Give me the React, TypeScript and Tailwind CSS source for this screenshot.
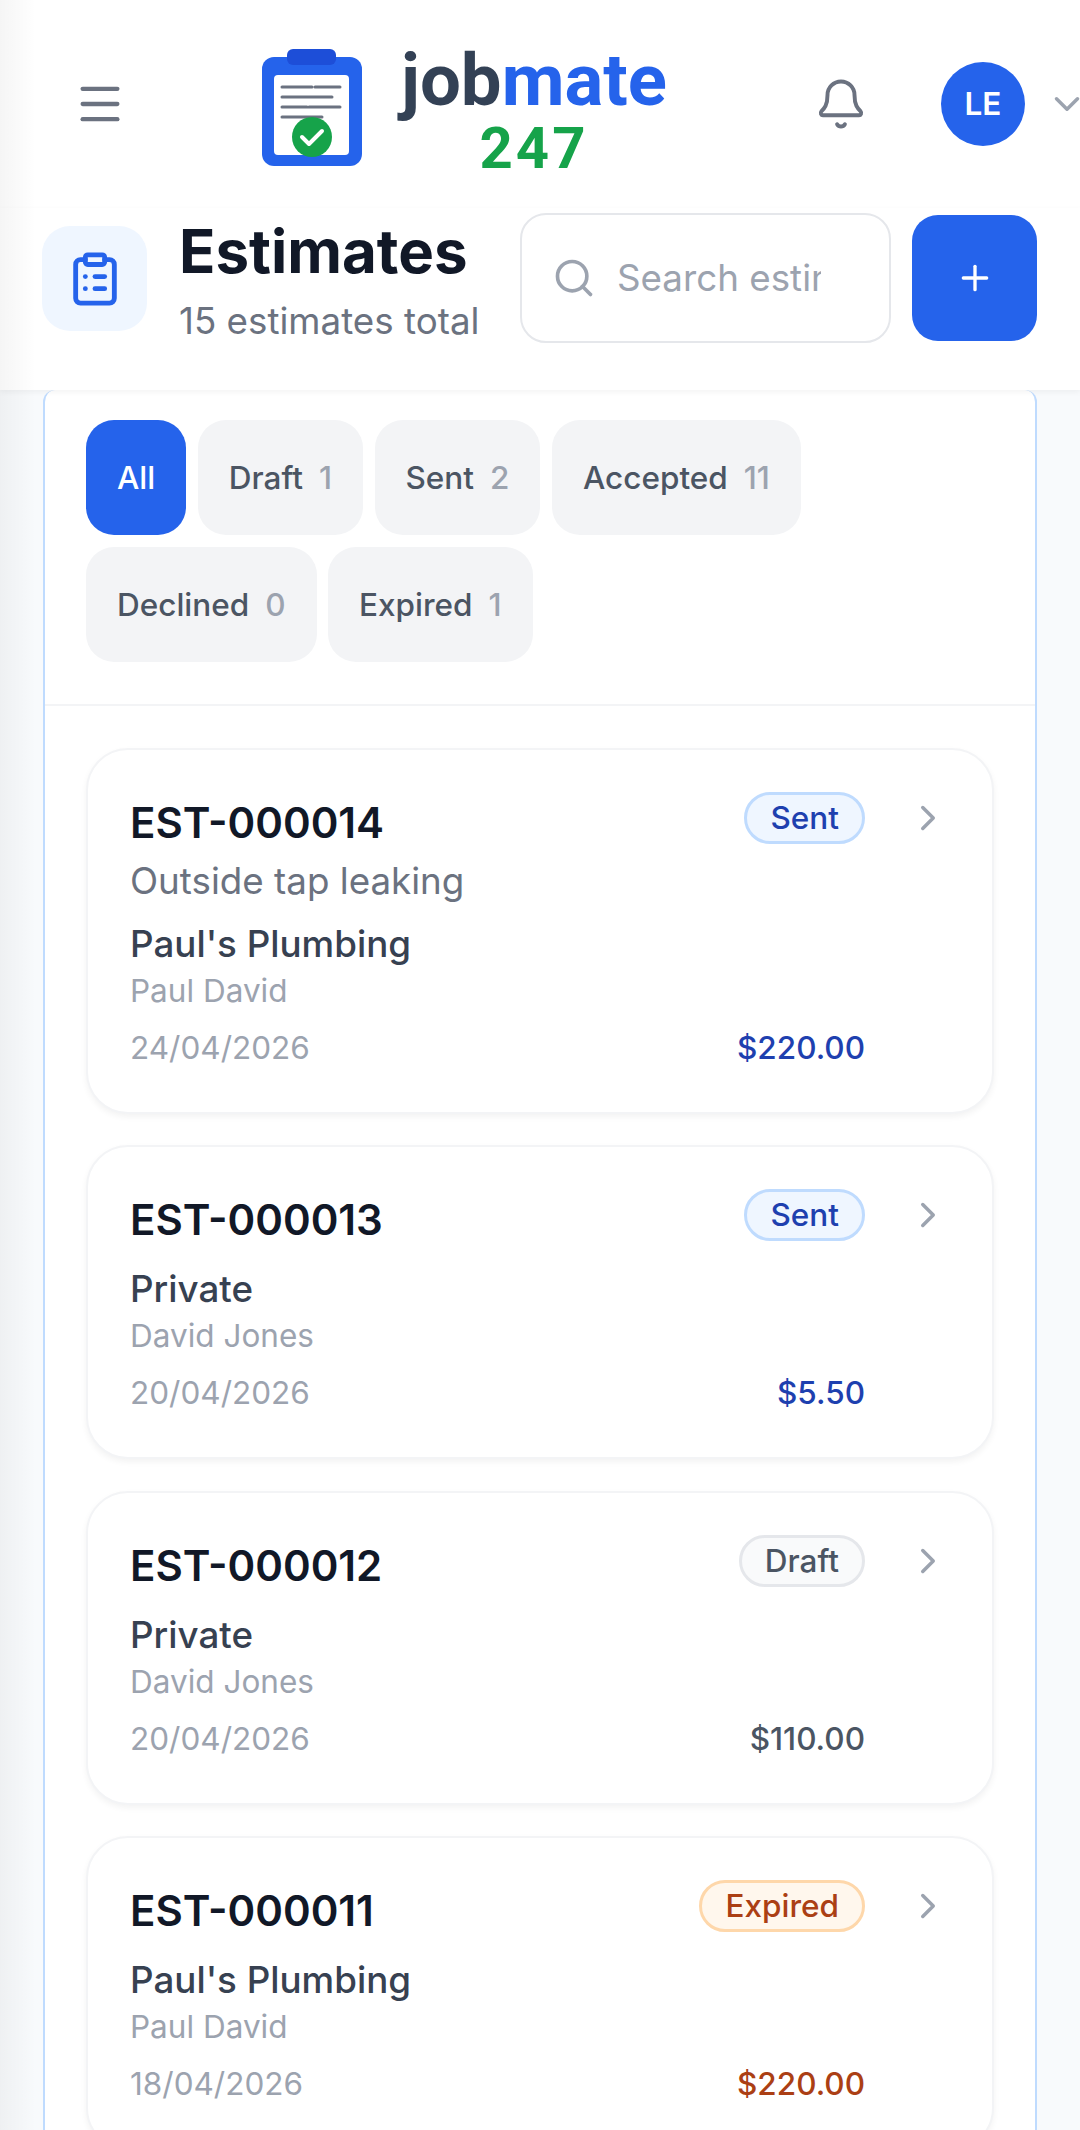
import { Bell, ChevronDown, ChevronRight, ClipboardList, Menu, Plus, Search } from "lucide-react";

const tabs = [
  ["Draft", "1"],
  ["Sent", "2"],
  ["Accepted", "11"],
  ["Declined", "0"],
  ["Expired", "1"],
];

type Est = {
  id: string;
  subject?: string;
  company: string;
  contact: string;
  date: string;
  amount: string;
  status: string;
  badge: string;
  amountColor: string;
};

const estimates: Est[] = [
  { id: "EST-000014", subject: "Outside tap leaking", company: "Paul's Plumbing", contact: "Paul David", date: "24/04/2026", amount: "$220.00", status: "Sent", badge: "bg-[#eff6ff] border-[#bfdbfe] text-[#1e40af]", amountColor: "text-[#1e40af]" },
  { id: "EST-000013", company: "Private", contact: "David Jones", date: "20/04/2026", amount: "$5.50", status: "Sent", badge: "bg-[#eff6ff] border-[#bfdbfe] text-[#1e40af]", amountColor: "text-[#1e40af]" },
  { id: "EST-000012", company: "Private", contact: "David Jones", date: "20/04/2026", amount: "$110.00", status: "Draft", badge: "bg-[#f9fafb] border-[#e5e7eb] text-[#4b5563]", amountColor: "text-[#4b5563]" },
  { id: "EST-000011", company: "Paul's Plumbing", contact: "Paul David", date: "18/04/2026", amount: "$220.00", status: "Expired", badge: "bg-[#fff7ed] border-[#fed7aa] text-[#ab3f14]", amountColor: "text-[#ab3f14]" },
];

function Logo() {
  return (
    <svg width="102" height="118" viewBox="0 0 102 118" className="shrink-0">
      <rect x="1" y="8" width="100" height="109" rx="12" fill="#2563eb" />
      <rect x="26" y="0" width="49" height="16" rx="6" fill="#1d4ed8" />
      <rect x="13" y="26" width="75" height="80" rx="4" fill="#ffffff" />
      <g stroke="#6b7280" strokeWidth="3" strokeLinecap="round">
        <path d="M21 38h30M54 38h25M21 48h50M21 58h25M48 58h31M21 68h40" />
      </g>
      <circle cx="51" cy="88" r="20" fill="#16a34a" />
      <path d="M41 88l7 7 13-13" fill="none" stroke="#ffffff" strokeWidth="4" strokeLinecap="round" strokeLinejoin="round" />
    </svg>
  );
}

function Card({ e }: { e: Est }) {
  return (
    <div className="flex rounded-[42px] border-2 border-[#f3f4f6] bg-white pl-[42px] pr-[43px] pt-[42px] pb-[44px] shadow-[0_3px_6px_rgba(0,0,0,0.05)]">
      <div className="min-w-0 flex-1">
        <div className="flex h-[60px] items-start justify-between">
          <div className="mt-[6px] text-[42px] font-semibold leading-[50px] text-[#111827]">{e.id}</div>
          <div className={`flex h-[52px] items-center rounded-full border-[3px] px-[23px] text-[31.5px] font-medium ${e.badge}`}>{e.status}</div>
        </div>
        {e.subject && <div className="mt-[7px] text-[36.75px] leading-[44.5px] text-[#6b7280]">{e.subject}</div>}
        <div className="mt-[15px] text-[36.75px] font-medium leading-[50px] text-[#374151]">{e.company}</div>
        <div className="mt-[2px] text-[31.5px] leading-[40px] text-[#9ca3af]">{e.contact}</div>
        <div className="mt-[17px] flex items-center justify-between text-[31.5px] leading-[40px]">
          <span className="text-[#9ca3af]">{e.date}</span>
          <span className={`font-medium ${e.amountColor}`}>{e.amount}</span>
        </div>
      </div>
      <ChevronRight size={42} strokeWidth={2} className="ml-[42px] mt-[5px] shrink-0 text-[#9ca3af]" />
    </div>
  );
}

export default function App() {
  return (
    <div className="relative h-[2130px] w-[1080px] overflow-hidden bg-[#f8fafc] font-['Inter',sans-serif]">
      <div className="pointer-events-none absolute inset-y-0 left-0 z-20 w-[36px] bg-gradient-to-r from-[rgba(0,0,0,0.04)] to-transparent" />
      <header className="relative z-10 flex h-[208px] items-center bg-white pl-[74px] shadow-[0_2px_6px_rgba(0,0,0,0.06)]">
        <Menu size={52} strokeWidth={2} className="shrink-0 text-[#6b7280]" />
        <div className="ml-[135px] flex items-center">
          <div className="mt-[7px]">
            <Logo />
          </div>
          <div className="ml-[35px] flex w-[272px] flex-col items-center pt-[14px] pb-[3px]">
            <div className="font-['Roboto',sans-serif] text-[72.5px] font-bold leading-[62px] text-[#334155]">
              job<span className="text-[#2563eb]">mate</span>
            </div>
            <div className="mt-[14px] font-['Roboto',sans-serif] text-[58px] font-bold leading-[44px] tracking-[3px] text-[#16a34a]">247</div>
          </div>
        </div>
        <Bell size={54} strokeWidth={1.75} className="ml-[144px] shrink-0 text-[#6b7280]" />
        <div className="ml-[73px] flex h-[84px] w-[84px] shrink-0 items-center justify-center rounded-full bg-[#2563eb] text-[31.5px] font-semibold text-white">LE</div>
        <ChevronDown size={42} strokeWidth={2} className="ml-[21px] shrink-0 text-[#9ca3af]" />
      </header>

      <section className="relative z-10 flex h-[182px] items-start bg-white pl-[42px] pr-[43px] pt-[5px] shadow-[0_2px_6px_rgba(0,0,0,0.05)]">
        <div className="mt-[13px] flex h-[105px] w-[105px] shrink-0 items-center justify-center rounded-[28px] bg-[#eff6ff]">
          <ClipboardList size={58} strokeWidth={2} className="text-[#2563eb]" />
        </div>
        <div className="ml-[32px] w-[341px] shrink-0">
          <div className="text-[60px] font-bold leading-[76px] text-[#111827]">Estimates</div>
          <div className="mt-[7px] whitespace-nowrap text-[36.75px] leading-[50px] text-[#6b7280]">15 estimates total</div>
        </div>
        <div className="flex h-[130px] w-[371px] shrink-0 items-center rounded-[26px] border-2 border-[#e5e7eb] bg-white pl-[30px] pr-[68px]">
          <Search size={44} strokeWidth={2} className="shrink-0 text-[#9ca3af]" />
          <input placeholder="Search estimates..." className="ml-[21px] w-full min-w-0 bg-transparent text-[36.75px] text-[#111827] outline-none placeholder:text-[#9ca3af]" />
        </div>
        <button className="ml-[21px] mt-[2px] flex h-[126px] w-[125px] shrink-0 items-center justify-center rounded-[26px] bg-[#2563eb] text-white">
          <Plus size={40} strokeWidth={2} />
        </button>
      </section>

      <main className="px-[43px]">
        <div className="rounded-t-[12px] border-x-2 border-[#bfdbfe] bg-white">
          <div className="flex flex-wrap gap-x-[11.5px] gap-y-[12px] border-b-2 border-[#f3f4f6] pl-[41px] pr-[42px] pt-[30px] pb-[42px]">
            <div className="flex h-[115px] items-center rounded-[28px] bg-[#2563eb] px-[31px] text-[31.5px] font-medium text-white">All</div>
            {tabs.map(([n, c]) => (
              <div key={n} className="flex h-[115px] items-center gap-[16px] rounded-[28px] bg-[#f3f4f6] px-[31px] text-[31.5px] font-medium text-[#4b5563]">
                <span>{n}</span>
                <span className="text-[#9ca3af]">{c}</span>
              </div>
            ))}
          </div>
          <div className="flex flex-col gap-[31.5px] px-[41px] pt-[42px]">
            {estimates.map((e) => (
              <Card key={e.id} e={e} />
            ))}
          </div>
        </div>
      </main>
    </div>
  );
}
